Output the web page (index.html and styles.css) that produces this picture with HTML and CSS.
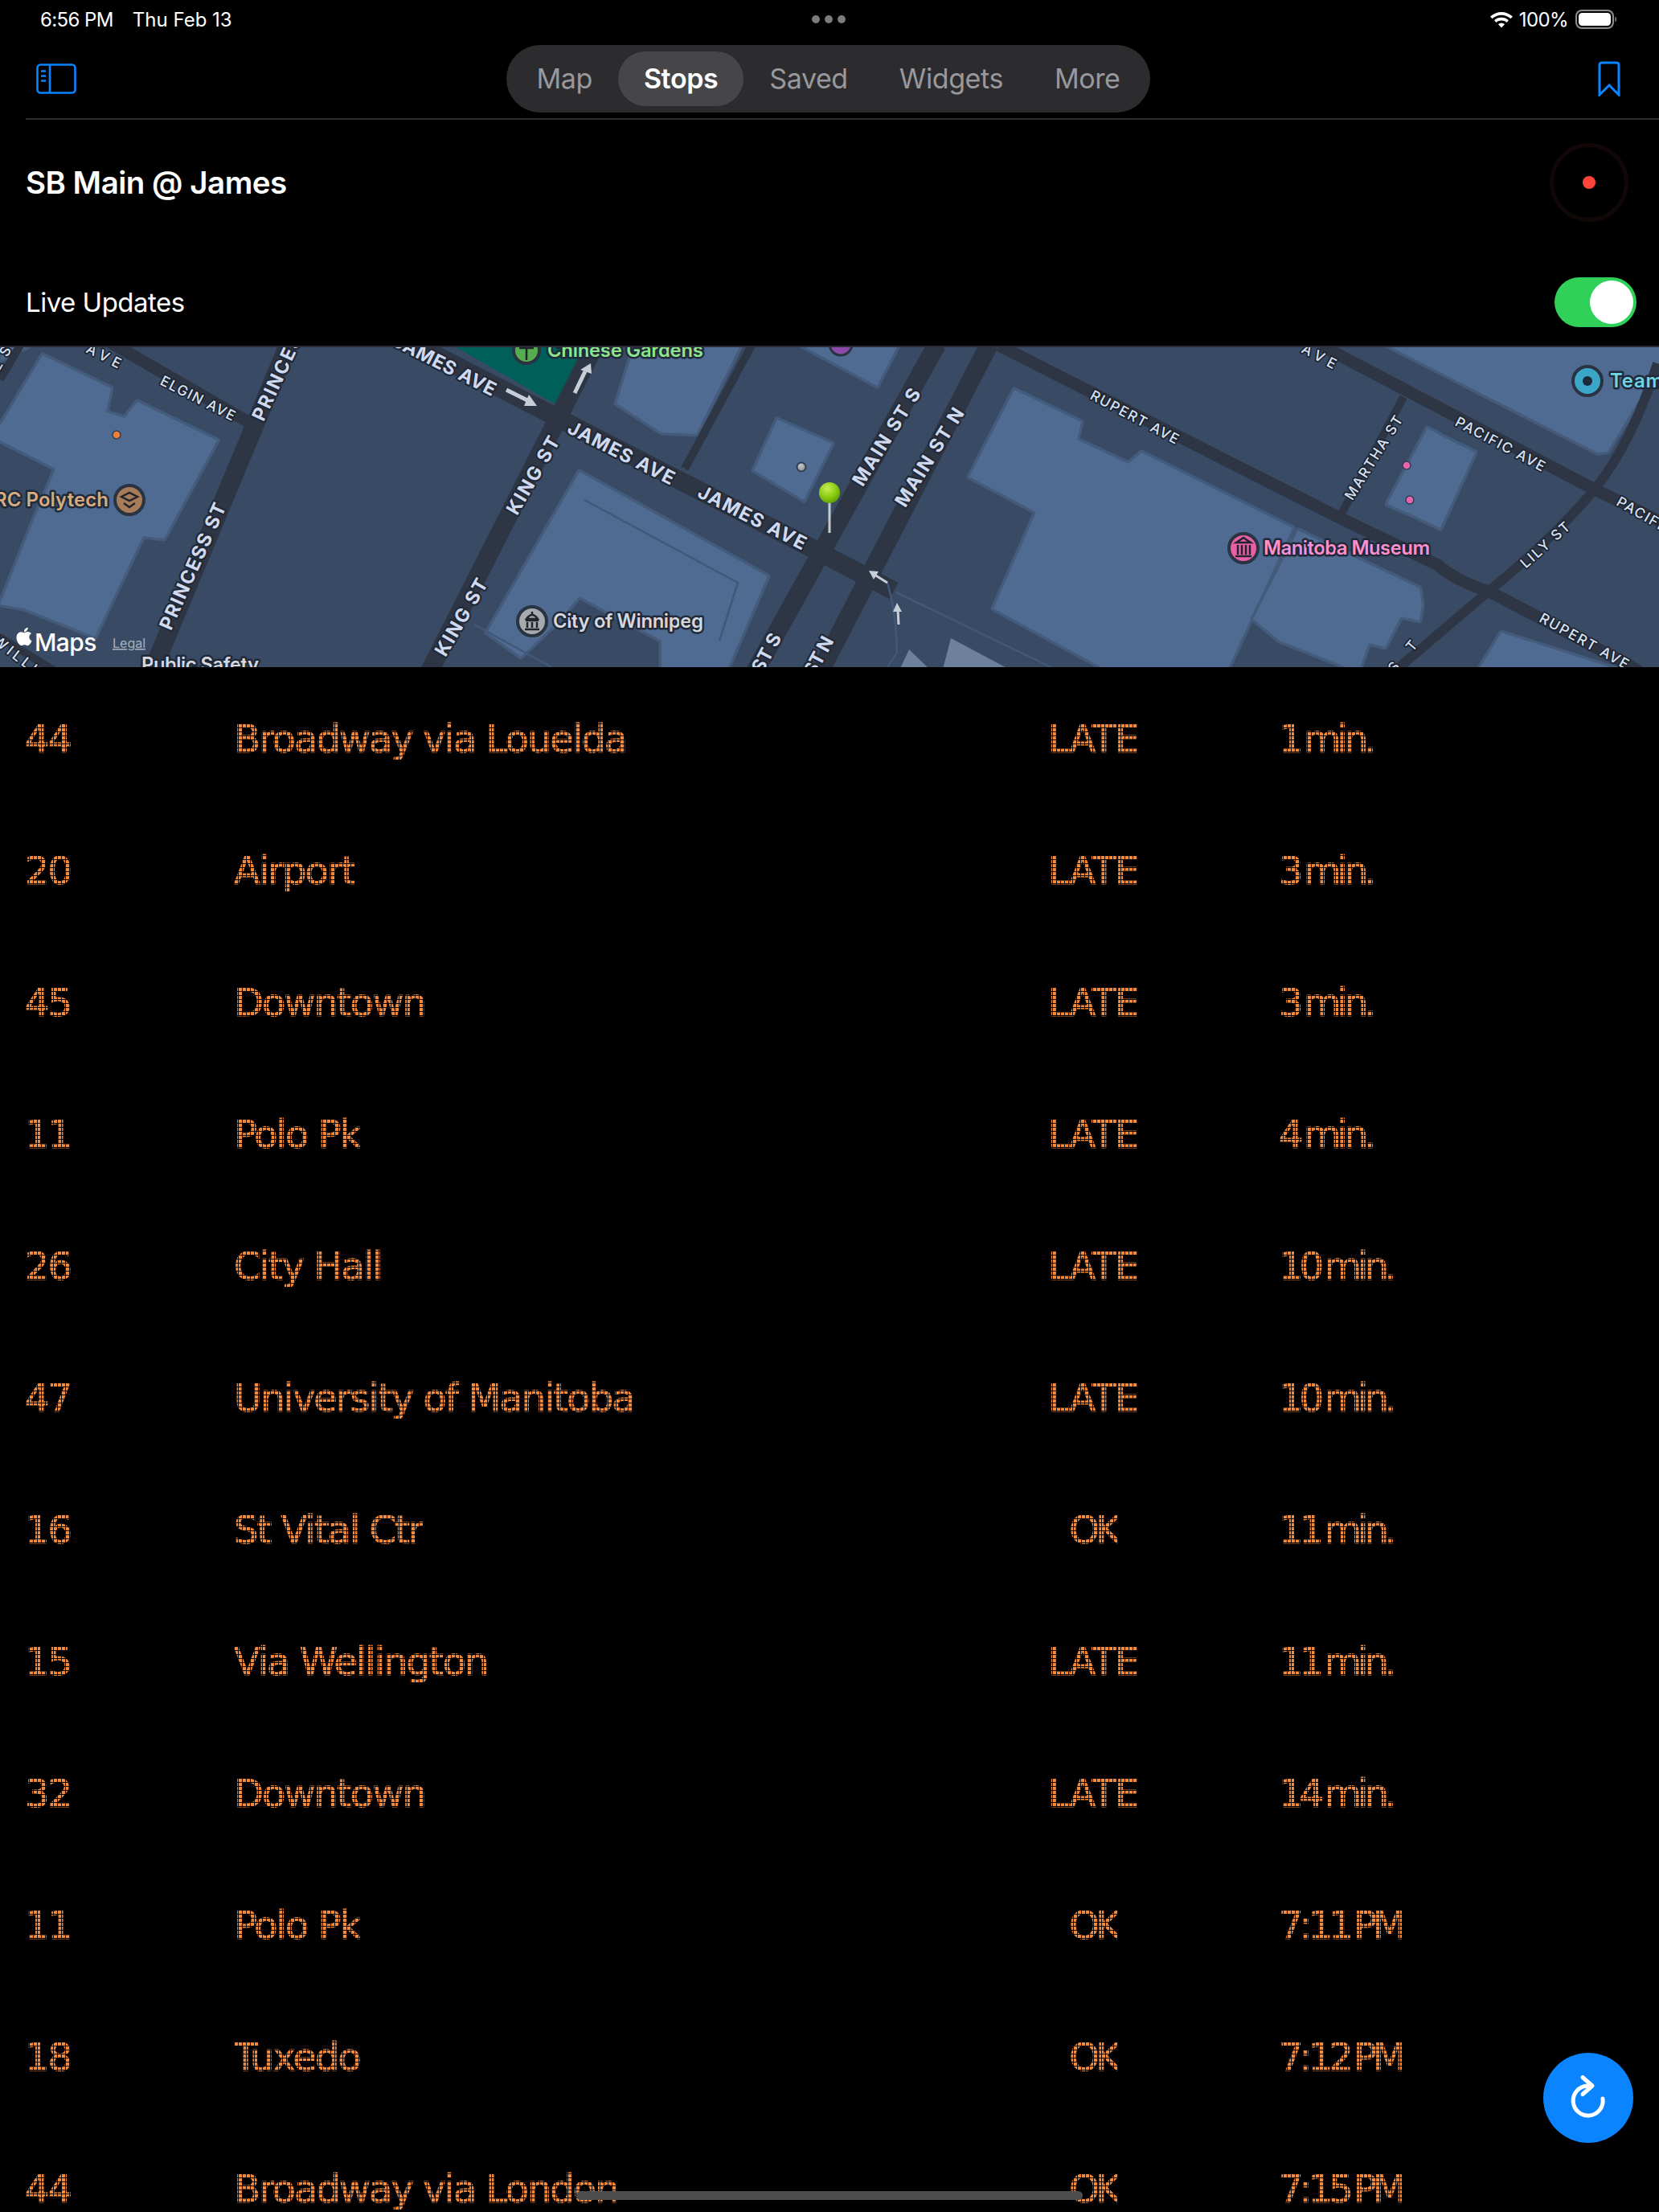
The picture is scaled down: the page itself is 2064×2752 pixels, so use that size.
FILE: index.html
```html
<!DOCTYPE html>
<html lang="en">
<head>
<meta charset="utf-8">
<title>SB Main @ James</title>
<link rel="stylesheet" href="styles.css">
</head>
<body>
<div class="screen">
  <header class="status">
    <div class="status-left"><span>6:56 PM</span><span class="status-date">Thu Feb 13</span></div>
    <div class="grabber"><i></i><i></i><i></i></div>
    <div class="status-right">
      <svg class="wifi" viewBox="0 0 30 24"><path d="M1 8.5C9 1 21 1 29 8.5L26.4 11.2C20 5.2 10 5.2 3.6 11.2Z"/><path d="M6 13.3C11 8.7 19 8.7 24 13.3L21.4 16C18 12.8 12 12.8 8.6 16Z"/><path d="M11 18.2C13.2 16.2 16.8 16.2 19 18.2L15 22.5Z"/></svg>
      <span>100%</span>
      <svg class="battery" viewBox="0 0 52 24"><rect class="batt-shell" x="1" y="1" width="46" height="22" rx="7"/><rect class="batt-fill" x="4" y="4" width="40" height="16" rx="4.5"/><path class="batt-cap" d="M49.5 8.5c2 .8 2 6.200 0 7z"/></svg>
    </div>
  </header>

  <nav class="toolbar">
    <svg class="side-icon" viewBox="0 0 50 38"><rect x="1.500" y="1.500" width="47" height="35" rx="4"/><path d="M17 1.500V36.500M6 9.500H12M6 15.500H12M6 21.500H12"/></svg>
    <div class="segments">
      <span class="seg">Map</span>
      <span class="seg seg-on">Stops</span>
      <span class="seg">Saved</span>
      <span class="seg">Widgets</span>
      <span class="seg">More</span>
    </div>
    <svg class="mark-icon" viewBox="0 0 28 44"><path d="M2 42V5Q2 2 5 2H23Q26 2 26 5V42L14 30Z"/></svg>
  </nav>

  <section class="title-row">
    <h1>SB Main @ James</h1>
    <div class="pulse"><i></i></div>
  </section>

  <section class="live-row">
    <span>Live Updates</span>
    <div class="toggle"><i></i></div>
  </section>

  <div class="map">
    <svg class="map-svg" viewBox="0 0 2064 400">
      <defs>
        <radialGradient id="pinGrad" cx="0.4" cy="0.3" r="0.75">
          <stop offset="0" stop-color="#c9ee55"/>
          <stop offset="0.6" stop-color="#86c90f"/>
          <stop offset="1" stop-color="#5f9a05"/>
        </radialGradient>
        <radialGradient id="greyGrad" cx="0.4" cy="0.3" r="0.8">
          <stop offset="0" stop-color="#c4c8cc"/>
          <stop offset="1" stop-color="#85898f"/>
        </radialGradient>
      </defs>
      <rect class="ground" width="2064" height="400"/>
      <g class="bld">
        <polygon points="53,10 138,51 132,81 155,88 171,68 270,116 204,238 178,235 118,360 30,325 0,320 40,220 69,151 0,116 0,98"/>
        <polygon points="721,155 955,285 905,400 823,400 823,365 721,310 690,345 648,385 606,355"/>
        <polygon points="790,-4 922,-4 866,108 823,106 767,70"/>
        <polygon points="967,90 1035,120 1000,190 938,153"/>
        <polygon points="994,-4 1118,-4 1091,48"/>
        <polygon points="1262,53 1345,93 1340,115 1404,145 1420,131 1608,225 1526,404 1381,404 1236,325 1289,205 1206,161"/>
        <polygon points="1615,228 1766,300 1769,321 1766,340 1743,335 1723,373 1703,368 1690,404 1592,365 1559,338"/>
        <polygon points="1776,101 1802,115 1835,131 1792,225 1756,208 1726,195"/>
        <polygon points="1723,-4 2068,-4 2068,18 2000,130 1987,131"/>
        <polygon points="1868,355 2022,404 1838,404"/>
        <polygon points="0,16 14,-4 40,-4"/>
      </g>
      <polygon class="park" points="560,-4 731,-4 695,73"/>
      <polygon class="grey-bld" points="1131,376 1160,404 1118,404"/>
      <polygon class="grey-bld" points="1183,362 1262,404 1172,404"/>
      <g class="roads">
        <path class="r22" d="M359 -4L189 404"/>
        <path class="r22" d="M741 -4L534 404"/>
        <path class="r22" d="M515 -4L1035 263L1112 303"/>
        <path class="r22" d="M1166 -4L939 404"/>
        <path class="r22" d="M1231 -4L1020 404"/>
        <path class="r16" d="M130 -10L309 93"/>
        <path class="r16" d="M1243 -2L1664 211L1789 271Q1810 290 1855 305L2022 393L2040 404"/>
        <path class="r16" d="M1644 -2L1980 175L2068 218"/>
        <path class="r10" d="M1746 62L1667 211"/>
        <path class="r12" d="M2062 20Q2030 120 1983 178Q1930 240 1855 301L1734 404"/>
        <path class="r10" d="M936 -4L852 151"/>
        <path class="r10" d="M0 361L70 404"/>
        <path class="r10" d="M26 -4L0 40"/>
        <path class="r-thin" d="M1104 293Q1115 330 1116 380L1100 404M1115 305L1320 404M590 345L690 400M727 190L918 293L895 365"/>
      </g>
      <g class="arrows">
        <path class="shaft" d="M630 53L658 67"/>
        <polygon points="668,73 652,73 658,59"/>
        <path class="shaft" d="M715 57L728 30"/>
        <polygon points="735,20 722,28 736,33"/>
        <path class="shaft thin" d="M1104 293L1088 283"/>
        <polygon points="1081,278 1093,279 1087,289"/>
        <path class="shaft thin" d="M1118 345L1117 326"/>
        <polygon points="1116,318 1111,329 1122,329"/>
      </g>

      <g class="st-b">
        <text transform="translate(205 350) rotate(-66)" textLength="170">PRINCESS ST</text>
        <text transform="translate(320 90) rotate(-65)" textLength="175">PRINCESS ST</text>
        <text transform="translate(636 206) rotate(-60)" textLength="108">KING ST</text>
        <text transform="translate(547 382) rotate(-60)" textLength="107">KING ST</text>
        <text transform="translate(491 -10) rotate(27)" textLength="140">JAMES AVE</text>
        <text transform="translate(708 98) rotate(27)" textLength="146">JAMES AVE</text>
        <text transform="translate(870 178) rotate(27)" textLength="148">JAMES AVE</text>
        <text transform="translate(1066 170) rotate(-58)" textLength="138">MAIN ST S</text>
        <text transform="translate(1119 196) rotate(-58)" textLength="140">MAIN ST N</text>
        <text transform="translate(941 403) rotate(-62)" textLength="52">ST S</text>
        <text transform="translate(1006 407) rotate(-62)" textLength="52">ST N</text>
      </g>
      <g class="st-s">
        <text transform="translate(201 40) rotate(27)" textLength="102">ELGIN AVE</text>
        <text transform="translate(109 0) rotate(27)" textLength="46">AVE</text>
        <text transform="translate(-14 40) rotate(-60)" textLength="60">DE ST</text>
        <text transform="translate(1358 58) rotate(28)" textLength="122">RUPERT AVE</text>
        <text transform="translate(1917 335) rotate(29)" textLength="124">RUPERT AVE</text>
        <text transform="translate(1812 91) rotate(28)" textLength="124">PACIFIC AVE</text>
        <text transform="translate(2013 190) rotate(30)" textLength="124">PACIFIC AVE</text>
        <text transform="translate(1677 188) rotate(-58)" textLength="120">MARTHA ST</text>
        <text transform="translate(1894 271) rotate(-42)" textLength="76">LILY ST</text>
        <text transform="translate(1621 0) rotate(28)" textLength="46">AVE</text>
        <text transform="translate(1730 402) rotate(-50)" textLength="46">ST</text>
        <text transform="translate(-6 362) rotate(38)" textLength="100">WILLIAM</text>
      </g>

      <circle class="dot-purple" cx="1046" cy="-4" r="14"/>
      <circle class="dot-orange" cx="145" cy="109" r="5"/>
      <circle class="dot-grey" cx="997" cy="149" r="5.500"/>
      <circle class="dot-pink" cx="1750" cy="147" r="5"/>
      <circle class="dot-pink" cx="1754" cy="190" r="5"/>

      <g class="poi">
        <circle class="ic-green" cx="655" cy="4" r="16"/>
        <path class="glyph-d" d="M646 1H664M655 1V16M650 -4H660"/>
        <text class="tx-green" x="681" y="12" textLength="194">Chinese Gardens</text>

        <circle class="ic-tan" cx="161" cy="190" r="18"/>
        <path class="glyph-d" d="M151 186L161 181L171 186L161 191ZM154 194L161 199L168 194"/>
        <text class="tx-tan" x="-7" y="198" textLength="142">RC Polytech</text>

        <circle class="ic-grey" cx="662" cy="341" r="18"/>
        <path class="glyph-d" d="M662 329V334M655 338Q662 328 669 338ZM654 340H670M656 342V349M662 342V349M668 342V349M653 351H671"/>
        <text class="tx-grey" x="688" y="349" textLength="187">City of Winnipeg</text>

        <text class="tx-plain" x="176" y="403" textLength="146">Public Safety</text>

        <circle class="ic-pink" cx="1547" cy="250" r="18"/>
        <path class="glyph-d" d="M1538 243L1547 237L1556 243ZM1540 246V258M1545 246V258M1550 246V258M1555 246V258M1537 260H1557"/>
        <text class="tx-pink" x="1572" y="258" textLength="207">Manitoba Museum</text>

        <circle class="ic-blue" cx="1975" cy="42" r="18"/>
        <circle class="ic-core" cx="1975" cy="42" r="6"/>
        <text class="tx-blue" x="2003" y="50" textLength="66">Team</text>
      </g>

      <g class="pin">
        <path class="pin-stem" d="M1032 185V231"/>
        <circle class="pin-head" cx="1032" cy="181" r="13"/>
      </g>

      <path class="apple" transform="translate(15 345) scale(1.25)" d="M17.05 20.28c-.98.95-2.05.8-3.08.35-1.09-.46-2.09-.48-3.24 0-1.44.62-2.2.44-3.06-.35C2.79 15.25 3.51 7.59 9.05 7.31c1.35.07 2.29.74 3.08.8 1.18-.24 2.31-.93 3.57-.84 1.51.12 2.65.72 3.4 1.8-3.12 1.87-2.38 5.98.48 7.13-.57 1.5-1.31 2.99-2.54 4.09zM12.03 7.25c-.15-2.23 1.66-4.07 3.74-4.25.29 2.58-2.34 4.5-3.74 4.25z"/>
      <text class="maps-word" x="43" y="378">Maps</text>
      <text class="legal" x="140" y="374">Legal</text>
    </svg>
  </div>

  <main class="board">
    <div class="row"><span class="led">44</span><span class="led">Broadway via Louelda</span><span class="led state">LATE</span><span class="led eta">1 min.</span></div>
    <div class="row"><span class="led">20</span><span class="led">Airport</span><span class="led state">LATE</span><span class="led eta">3 min.</span></div>
    <div class="row"><span class="led">45</span><span class="led">Downtown</span><span class="led state">LATE</span><span class="led eta">3 min.</span></div>
    <div class="row"><span class="led">11</span><span class="led">Polo Pk</span><span class="led state">LATE</span><span class="led eta">4 min.</span></div>
    <div class="row"><span class="led">26</span><span class="led">City Hall</span><span class="led state">LATE</span><span class="led eta">10 min.</span></div>
    <div class="row"><span class="led">47</span><span class="led">University of Manitoba</span><span class="led state">LATE</span><span class="led eta">10 min.</span></div>
    <div class="row"><span class="led">16</span><span class="led">St Vital Ctr</span><span class="led state on-time">OK</span><span class="led eta">11 min.</span></div>
    <div class="row"><span class="led">15</span><span class="led">Via Wellington</span><span class="led state">LATE</span><span class="led eta">11 min.</span></div>
    <div class="row"><span class="led">32</span><span class="led">Downtown</span><span class="led state">LATE</span><span class="led eta">14 min.</span></div>
    <div class="row"><span class="led">11</span><span class="led">Polo Pk</span><span class="led state on-time">OK</span><span class="led eta">7:11 PM</span></div>
    <div class="row"><span class="led">18</span><span class="led">Tuxedo</span><span class="led state on-time">OK</span><span class="led eta">7:12 PM</span></div>
    <div class="row"><span class="led">44</span><span class="led">Broadway via London</span><span class="led state on-time">OK</span><span class="led eta">7:15 PM</span></div>
  </main>

  <button class="fab" type="button" aria-label="Refresh">
    <svg viewBox="0 0 60 60"><path d="M48 31A18.500 18.500 0 1 1 29 15M23 4.500L35 15L23 25.500"/></svg>
  </button>
  <div class="home-bar"></div>
</div>
</body>
</html>
```
FILE: styles.css
```css
* { box-sizing: border-box; }
html, body { margin: 0; padding: 0; background: #000; }
.screen {
  position: relative;
  width: 2064px;
  height: 2752px;
  overflow: hidden;
  background: #000;
  color: #fff;
  font-family: Inter, "Liberation Sans", sans-serif;
}

/* status bar */
.status {
  display: grid;
  grid-template-columns: 1fr auto 1fr;
  align-items: center;
  height: 48px;
  padding: 0 52px 0 50px;
  font-size: 24px;
  letter-spacing: -0.6px;
}
.status-left { display: flex; gap: 24px; }
.status-date { letter-spacing: 0; }
.grabber { display: flex; gap: 6px; }
.grabber i { width: 10px; height: 10px; border-radius: 50%; background: #7c7c7c; }
.status-right { display: flex; justify-content: flex-end; align-items: center; gap: 7px; }
.wifi { width: 30px; height: 24px; fill: #fff; }
.battery { width: 52px; height: 24px; margin-left: 2px; }
.batt-shell { fill: none; stroke: #8d8d8d; stroke-width: 2; }
.batt-fill { fill: #fff; }
.batt-cap { fill: #8d8d8d; }

/* toolbar */
.toolbar {
  display: grid;
  grid-template-columns: 1fr auto 1fr;
  align-items: center;
  height: 101px;
  margin-left: 32px;
  padding: 0 48px 0 13px;
  border-bottom: 2px solid #2f2f31;
}
.side-icon { width: 50px; height: 38px; fill: none; stroke: #0a84ff; stroke-width: 2.6; }
.mark-icon { width: 28px; height: 44px; justify-self: end; fill: none; stroke: #0a84ff; stroke-width: 3; }
.segments {
  display: flex;
  align-items: center;
  height: 84px;
  padding: 0 5px;
  border-radius: 42px;
  background: #2c2c2e;
  font-size: 34px;
  letter-spacing: -0.4px;
  color: #98989d;
}
.seg { display: flex; align-items: center; height: 68px; padding: 0 32px; border-radius: 34px; }
.seg-on { background: #464649; color: #fff; font-weight: 600; }

/* title and live rows */
.title-row {
  display: flex;
  align-items: center;
  justify-content: space-between;
  height: 156px;
  padding: 0 38px 0 32px;
}
.title-row h1 { margin: 0; font-size: 38.500px; font-weight: 600; letter-spacing: -0.5px; }
.pulse {
  display: flex;
  align-items: center;
  justify-content: center;
  width: 98px;
  height: 98px;
  border: 5px solid #120707;
  border-radius: 50%;
}
.pulse i { width: 16px; height: 16px; border-radius: 50%; background: #ff453a; }
.live-row {
  display: flex;
  align-items: center;
  justify-content: space-between;
  height: 125px;
  padding: 16px 28px 0 32px;
  font-size: 33px;
  letter-spacing: -0.5px;
}
.toggle {
  display: flex;
  justify-content: flex-end;
  align-items: center;
  width: 102px;
  height: 62px;
  padding: 0 4px;
  border-radius: 31px;
  background: #30d158;
}
.toggle i { width: 54px; height: 54px; border-radius: 50%; background: #fff; }

/* map */
.map { height: 400px; border-top: 2px solid #2a2d33; overflow: hidden; }
.map-svg { display: block; width: 2064px; height: 400px; font-family: Inter, "Liberation Sans", sans-serif; }
.ground { fill: #394b64; }
.bld polygon {
  fill: #4f6b91;
  stroke: #445b7c;
  stroke-width: 7;
  stroke-linejoin: round;
  paint-order: stroke;
}
.park { fill: #005f58; }
.grey-bld { fill: #6d819c; }
.roads path { fill: none; stroke: #2e3544; stroke-linecap: butt; }
.r22 { stroke-width: 23px; }
.r16 { stroke-width: 15px; }
.r12 { stroke-width: 12px; }
.r10 { stroke-width: 10px; }
.roads .r-thin { stroke: #425878; stroke-width: 2.500px; }
.arrows polygon { fill: #c8ced8; }
.shaft { fill: none; stroke: #c8ced8; stroke-width: 5px; }
.shaft.thin { stroke-width: 3px; }

.st-b text, .st-s text, .poi text, .legal {
  paint-order: stroke;
  stroke-linejoin: round;
  dominant-baseline: central;
}
.st-b text {
  font-size: 23.500px;
  font-weight: 700;
  fill: #cfdaf0;
  stroke: #222936;
  stroke-width: 4.500px;
}
.st-s text {
  font-size: 17.500px;
  font-weight: 500;
  fill: #d8e2f3;
  stroke: #1d2431;
  stroke-width: 3.500px;
}
.poi text {
  dominant-baseline: auto;
  font-size: 24px;
  font-weight: 600;
  stroke: #202a3a;
  stroke-width: 5px;
}
.tx-green { fill: #8fe58a; }
.tx-tan { fill: #d6ab82; }
.tx-grey { fill: #d5d9df; }
.tx-plain { fill: #d5d9df; }
.tx-pink { fill: #ff8fcf; }
.tx-blue { fill: #6fd4e6; }
.poi circle { stroke: #2a3342; stroke-width: 4px; }
.ic-green { fill: #56ad4f; }
.ic-tan { fill: #a97c58; }
.ic-grey { fill: #a6a9ae; }
.ic-pink { fill: #e85fa8; }
.ic-blue { fill: #3aa7c9; }
.poi .ic-core { fill: #1c2a3a; stroke: none; }
.glyph-d { fill: none; stroke: #20242c; stroke-width: 2.500px; }
.dot-purple { fill: #8c4aa8; stroke: #2a3342; stroke-width: 3px; }
.dot-orange { fill: #ee7f33; stroke: #2f3d52; stroke-width: 1.500px; }
.dot-grey { fill: url(#greyGrad); stroke: #2f3d52; stroke-width: 2px; }
.dot-pink { fill: #ec63ad; stroke: #2f3d52; stroke-width: 1.500px; }
.pin-stem { stroke: #c7cbd0; stroke-width: 3px; }
.pin-head { fill: url(#pinGrad); }
.apple { fill: #fff; }
.maps-word { font-size: 30px; font-weight: 500; fill: #fff; letter-spacing: -0.6px; }
.legal { font-size: 16px; fill: #a8b0bc; text-decoration: underline; stroke: none; dominant-baseline: auto; }

/* departures */
.board { padding-top: 8px; }
.row {
  display: grid;
  grid-template-columns: 260px 838px 462px 1fr;
  align-items: center;
  height: 164px;
  padding-left: 31px;
}
.led {
  justify-self: start;
  display: inline-block;
  height: 50px;
  font-family: "DejaVu Sans", sans-serif;
  font-size: 48px;
  line-height: 49px;
  letter-spacing: -2px;
  white-space: nowrap;
  color: transparent;
  -webkit-text-stroke: 1.200px transparent;
  background-color: #f58a3a;
  background-image:
    linear-gradient(90deg, #000 1px, transparent 1px),
    linear-gradient(#000 1px, transparent 1px);
  background-size: 5px 5px;
  -webkit-background-clip: text;
  background-clip: text;
}
.state { justify-self: center; letter-spacing: -1px; }
.on-time { letter-spacing: -5px; }
.eta { letter-spacing: -5px; word-spacing: -5px; }

/* overlays */
.fab {
  position: absolute;
  left: 1920px;
  top: 2554px;
  display: flex;
  align-items: center;
  justify-content: center;
  width: 112px;
  height: 112px;
  padding: 0;
  border: 0;
  border-radius: 50%;
  background: #0a84ff;
}
.fab svg { width: 60px; height: 60px; fill: none; stroke: #fff; stroke-width: 5; stroke-linecap: round; stroke-linejoin: round; }
.home-bar {
  position: absolute;
  left: 717px;
  top: 2726px;
  width: 630px;
  height: 11px;
  border-radius: 6px;
  background: #4d4d4d;
}
```
